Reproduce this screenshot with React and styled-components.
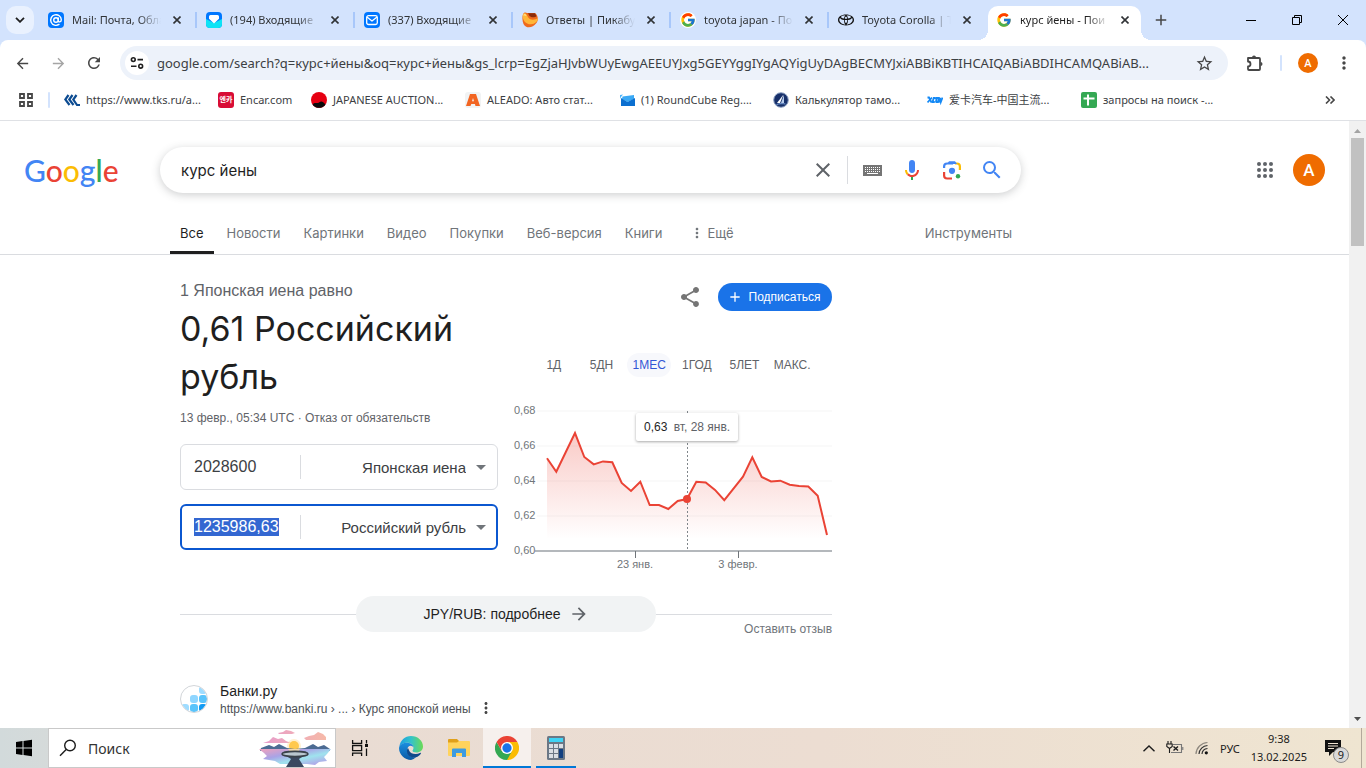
import { useEffect, useRef, useState } from 'react';
import styled, { createGlobalStyle, css } from 'styled-components';
import { FcGoogle } from 'react-icons/fc';
import {
  MdAdd,
  MdArrowBack,
  MdArrowForward,
  MdClose,
  MdMoreVert,
  MdRefresh,
  MdSearch,
  MdShare,
  MdStarBorder,
} from 'react-icons/md';
import { SiToyota } from 'react-icons/si';

const uiFont = '"Noto Sans", "Noto Sans CJK SC", sans-serif';
const pageFont = '"Liberation Sans", Arial, sans-serif';
const brandFont = 'Inter, "Open Sans", sans-serif';

const rates = [
  0.653, 0.6453, 0.6564, 0.6674, 0.6537, 0.6495, 0.6512, 0.6507, 0.6389, 0.6343,
  0.6396, 0.6263, 0.6263, 0.624, 0.6286, 0.6297, 0.6396, 0.6392, 0.6349, 0.6291,
  0.6358, 0.6425, 0.6535, 0.6423, 0.6398, 0.6402, 0.6379, 0.6371, 0.6368, 0.6316,
  0.6091,
];
const activeDay = 15;
const gridValues = [0.68, 0.66, 0.64, 0.62];

const ranges = ['1Д', '5ДН', '1МЕС', '1ГОД', '5ЛЕТ', 'МАКС.'];

const searchTabs = ['Все', 'Новости', 'Картинки', 'Видео', 'Покупки', 'Веб-версия', 'Книги'];

const url =
  'google.com/search?q=курс+йены&oq=курс+йены&gs_lcrp=EgZjaHJvbWUyEwgAEEUYJxg5GEYYggIYgAQYigUyDAgBECMYJxiABBiKBTIHCAIQABiABDIHCAMQABiAB...';

/* ---------- favicons ---------- */

const MailIcon = () => (
  <svg width="16" height="16" viewBox="0 0 16 16">
    <rect width="16" height="16" rx="4" fill="#07f" />
    <g fill="none" stroke="#fff" strokeWidth="1.4" strokeLinecap="round">
      <circle cx="8" cy="8" r="2.3" />
      <path d="M10.3 5.9v2.6c0 2 3 1.9 3-.7A5.3 5.3 0 1 0 11 12.4" />
    </g>
  </svg>
);

const InboxIcon = () => (
  <svg width="16" height="16" viewBox="0 0 16 16">
    <rect width="16" height="16" rx="4" fill="#07f" />
    <path d="M0 7l8 4 8-4v5a4 4 0 0 1-4 4H4a4 4 0 0 1-4-4z" fill="#0de3f5" />
    <path d="M4.5 3h7A1.5 1.5 0 0 1 13 4.5v2.3L8 11.5 3 6.800V4.500A1.500 1.500 0 0 1 4.500 3z" fill="#fff" />
  </svg>
);

const EnvelopeIcon = () => (
  <svg width="16" height="16" viewBox="0 0 16 16">
    <rect width="16" height="16" rx="4" fill="#07f" />
    <g fill="none" stroke="#fff" strokeWidth="1.3" strokeLinejoin="round">
      <rect x="2.7" y="3.7" width="10.6" height="8.8" rx="1.8" />
      <path d="M3 5l5 4 5-4" />
    </g>
  </svg>
);

const PikabuIcon = () => (
  <svg width="16" height="16" viewBox="0 0 16 16">
    <path d="M1 2.500C1.500 0 4 0 5 1h8c3 2 4 7 1 10.500C11 16 4 17 1.500 12 .3 9 0 5 1 2.500z" fill="#ef6a1c" />
    <path d="M.8 3c.7-2.500 3-2 4 0l1.500 2.500C8.500 8.500 13 8 16 6c0 3.500-3 6-7 6.300C4 12.500.3 8.500.8 3z" fill="#ffb638" />
    <path d="M6 1.200h7l1.500 3C13 5.500 9.500 5.800 7.500 4z" fill="#8a2c0c" />
    <path d="M1.800 3.500c.8-1.200 1.600-1 2.200.2" stroke="#ffe08a" fill="none" strokeWidth="1.2" />
  </svg>
);

const TksIcon = () => (
  <svg width="16" height="16" viewBox="0 0 16 16">
    <g fill="none" stroke="#0d4c92" strokeWidth="2.2">
      <path d="M4.500 3L1.300 7.500 5.500 13" />
      <path d="M8.500 3L5.300 7.500 9.500 13" />
      <path d="M12.500 3L9.300 7.500 13 13h3" />
    </g>
  </svg>
);

const AuctionIcon = () => (
  <svg width="16" height="16" viewBox="0 0 16 16">
    <circle cx="8" cy="8" r="8" fill="#e60012" />
    <path d="M1.500 12.500C4 9.500 6 12 8 10.500s3.500-2 6.500 2A8 8 0 0 1 1.500 12.500z" fill="#0b0b0b" />
  </svg>
);

const AleadoIcon = () => (
  <svg width="16" height="16" viewBox="0 0 16 16">
    <rect width="16" height="16" rx="3" fill="#f1f3f4" />
    <path d="M5 2h6l4 12h-4.500l-.6-2H6.300l-.8 2H1zM8 6L7 9.300h2z" fill="#f26522" fillRule="evenodd" />
  </svg>
);

const RoundCubeIcon = () => (
  <svg width="16" height="16" viewBox="0 0 16 16">
    <path d="M2 5L1 7V3l3-.500z" fill="#4fb4fb" />
    <path d="M3.500 4.500L15 3v4L8.500 10 3 7z" fill="#3aa9f5" />
    <path d="M2 6l6.500 4L16 6v8H2z" fill="#0b6fd0" />
  </svg>
);

const CustomsIcon = () => (
  <svg width="16" height="16" viewBox="0 0 16 16">
    <circle cx="8" cy="8" r="7.3" fill="#17306a" stroke="#8fa3c4" />
    <path d="M10.500 2.500L4 11h3z" fill="#fff" />
    <path d="M11 3v8H8z" fill="#b7cdec" />
    <path d="M3.500 12.500c3-1 6-1 9-.5" stroke="#7ea4dc" fill="none" />
  </svg>
);

const XcarIcon = () => (
  <svg width="16" height="16" viewBox="0 0 16 16">
    <g fill="none" stroke="#1489f5" strokeWidth="1.8">
      <path d="M.500 5.500h1.500l2.500 5M5 5.500l-4.500 5" />
      <path d="M8.500 6H6.800L5.500 10h2.300M8.500 10h2.500l.8-4H9.500L9 10" />
      <path d="M12 10.500L13 6l.8 4L15.500 5.500" />
    </g>
  </svg>
);

const SheetIcon = () => (
  <svg width="16" height="16" viewBox="0 0 16 16">
    <rect width="16" height="16" rx="2" fill="#34a853" />
    <path d="M6 2.500h2v3h5.500v2H8v6H6v-6H2.500v-2H6z" fill="#fff" />
  </svg>
);

/* ---------- page icons ---------- */

const CrossIcon = () => (
  <svg width="8" height="8" viewBox="0 0 8 8" fill="none" stroke="currentColor" strokeWidth="1.6">
    <path d="M.5 .5l7 7M7.500 .5l-7 7" />
  </svg>
);

const TuneIcon = () => (
  <svg width="16" height="16" viewBox="0 0 16 16" fill="none" stroke="#1f1f1f" strokeWidth="1.6">
    <circle cx="4.3" cy="4.6" r="1.9" />
    <path d="M8.500 4.600H14M2 11.200h5.500" />
    <circle cx="11.7" cy="11.2" r="1.9" />
  </svg>
);

const PuzzleIcon = () => (
  <svg width="18" height="18" viewBox="0 0 18 18">
    <path
      d="M2 4h11a1 1 0 0 1 1 1v10a1 1 0 0 1-1 1H3a1 1 0 0 1-1-1v-2.500a2.500 2.500 0 0 0 0-5z"
      fill="none"
      stroke="#474747"
      strokeWidth="1.8"
      strokeLinejoin="round"
    />
    <path d="M6 3.500a2 2 0 0 1 4 0zM14.500 8a2 2 0 0 1 0 4z" fill="#474747" />
  </svg>
);

const KeyboardIcon = () => (
  <svg width="19" height="11" viewBox="0 0 19 11">
    <rect width="19" height="11" fill="#757575" />
    <path d="M2 2.500h15M2 4.500h15M2 6.500h15" stroke="#fff" strokeDasharray="1 1" />
    <path d="M4 8.500h11" stroke="#fff" />
  </svg>
);

const MicIcon = () => (
  <svg width="24" height="24" viewBox="0 0 24 24">
    <path fill="#4285f4" d="M12 15c1.700 0 3-1.300 3-3V5c0-1.700-1.300-3-3-3S9 3.300 9 5v7c0 1.700 1.300 3 3 3z" />
    <path fill="#34a853" d="M11 18.100h2V22h-2z" />
    <path fill="#fbbc04" d="M7 12H5c0 1.900.8 3.700 2 5l1.500-1.500C7.600 14.600 7 13.400 7 12z" />
    <path fill="#ea4335" d="M12 17c-1.400 0-2.600-.6-3.500-1.500L7 17c1.300 1.300 3 2.100 5 2.100 3.900 0 7-3.200 7-7.100h-2c0 2.800-2.200 5-5 5z" />
  </svg>
);

const LensIcon = () => (
  <svg width="20" height="20" viewBox="0 0 20 20">
    <g fill="none" strokeWidth="2.2">
      <path d="M2.100 8V6.500a3 3 0 0 1 3-3H11" stroke="#4285f4" />
      <path d="M13 3.500h1.900a3 3 0 0 1 3 3V10" stroke="#fbbc04" />
      <path d="M2.100 12v3.500a3 3 0 0 0 3 3H10" stroke="#ea4335" />
    </g>
    <path d="M5 4l2-2.800h6L15 4z" fill="#4285f4" />
    <circle cx="10" cy="10.8" r="3.1" fill="#4285f4" />
    <circle cx="16" cy="16.2" r="2.2" fill="#34a853" />
  </svg>
);

const DotsIcon = () => (
  <svg width="16" height="16" viewBox="0 0 16 16" fill="#5f6368">
    {[2, 8, 14].map(y => [2, 8, 14].map(x => <circle key={`${x}-${y}`} cx={x} cy={y} r="2" />))}
  </svg>
);

const BankiIcon = () => (
  <svg width="28" height="28" viewBox="0 0 28 28">
    <defs>
      <clipPath id="bankiClip">
        <circle cx="14" cy="14" r="13" />
      </clipPath>
    </defs>
    <g clipPath="url(#bankiClip)">
      <rect x="19" y="1" width="8" height="8" rx="3" fill="#9fdcff" />
      <rect x="10" y="10" width="8" height="8" rx="3" fill="#8fd6ff" />
      <rect x="19" y="10" width="8" height="8" rx="3" fill="#5ac4fb" />
      <rect x="1" y="19" width="8" height="8" rx="3" fill="#9fdcff" />
      <rect x="10" y="19" width="8" height="8" rx="3" fill="#5ac4fb" />
      <rect x="19" y="19" width="8" height="8" rx="3" fill="#129bf4" />
    </g>
    <circle cx="14" cy="14" r="13.5" fill="none" stroke="#d2d5d9" />
  </svg>
);

/* ---------- taskbar icons ---------- */

const WindowsIcon = () => (
  <svg width="16" height="18" viewBox="0 0 16 18">
    <path d="M0 3l6.500-1v6.500H0zM7.500 1.900L16 .7v7.800H7.500zM0 9.500h6.500V16L0 15zM7.500 9.500H16v7.800l-8.500-1.200z" fill="#000" />
  </svg>
);

const Loupe = () => (
  <svg width="18" height="18" viewBox="0 0 18 18" fill="none" stroke="#1c1c1c" strokeWidth="1.4">
    <circle cx="11" cy="6.5" r="5.3" />
    <path d="M7.200 10.400L1 16.800" />
  </svg>
);

const LandscapeArt = () => (
  <svg width="74" height="38" viewBox="0 0 74 38">
    <defs>
      <linearGradient id="water" x1="0" x2="1" y1="0" y2="1">
        <stop offset="0" stopColor="#f3a1bb" />
        <stop offset=".35" stopColor="#a9a3e6" />
        <stop offset=".6" stopColor="#9fe3ee" />
        <stop offset="1" stopColor="#b78de6" />
      </linearGradient>
      <linearGradient id="cloud" x1="0" x2="1">
        <stop offset="0" stopColor="#e79dcb" />
        <stop offset="1" stopColor="#f6b9a8" />
      </linearGradient>
    </defs>
    <path d="M20 4l5-1 3-2 5 1 4 2-3 1H21zM46 9l5-2 5-1 4-3 5 2 3 3v3H48zM5 14l6-2 4-4 5 2 4-1 4 3 5 2H6z" fill="url(#cloud)" />
    <circle cx="36" cy="17" r="7" fill="#ffd98a" opacity=".4" />
    <circle cx="36" cy="17" r="5" fill="#ffc94d" />
    <path d="M3 19l8-3 5 2 5-3 8 4 8 1 10-1 8-4 5 3 6-2 6 4v2H2z" fill="#4c6b93" />
    <path d="M1 20h72l-4 5-3 3 3 4-8 1-4 3-8-1H22l-5-3-12-2 4-3-3-3z" fill="url(#water)" />
    <path d="M30 20h12l-3 5h-6z" fill="#ffe7a6" opacity=".8" />
    <path d="M27 26h20l-6 4 5 8H28l5-8z" fill="#3b4860" />
    <ellipse cx="37" cy="25" rx="13" ry="2.6" fill="#b9c6cf" stroke="#39414a" strokeWidth="1.6" />
  </svg>
);

const TaskViewIcon = () => (
  <svg width="18" height="16" viewBox="0 0 18 16" fill="none" stroke="#111" strokeWidth="1.3">
    <path d="M1.600 0v3.400h9V0M1.600 16v-2.800h9V16M1.600 5.500h9v5.200h-9zM15.500 0v3.500M15.500 8.500V16" />
    <path d="M14 4h3v3h-3z" fill="#111" stroke="none" />
  </svg>
);

const EdgeIcon = () => (
  <svg width="24" height="24" viewBox="0 0 24 24">
    <defs>
      <linearGradient id="edgeTop" x1="0" x2="1">
        <stop offset="0" stopColor="#1b9de2" />
        <stop offset=".5" stopColor="#33c3c9" />
        <stop offset="1" stopColor="#6cdb54" />
      </linearGradient>
      <linearGradient id="edgeLow" x1="0" x2="0" y1="0" y2="1">
        <stop offset="0" stopColor="#1a8fe0" />
        <stop offset="1" stopColor="#0c59a4" />
      </linearGradient>
    </defs>
    <path d="M.3 11C1 4.500 6 0 12 0c7 0 12 5 12 10.500 0 3.800-3 6-6.500 6-2.500 0-4-.8-4-1.700 0-.6 1-1.300 1-3C14.500 9 12 6.800 8.500 6.800 4.500 6.800 1 8.500.3 11z" fill="url(#edgeTop)" />
    <path d="M.1 11.500C.6 8.500 4 6.700 8 6.700c4 0 6.500 2.300 6.500 5-.5-1.200-1.700-1.900-2.700-1.900-2.500 0-3.800 2.400-3.500 4.900.4 4 4.200 7.200 8.700 6.600a12 12 0 0 1-5 2.700C5.500 24-.6 18 .1 11.500z" fill="url(#edgeLow)" />
    <path d="M9 12c-.9 1-1.200 2.500-1 4 .5 3.700 4.500 6.300 9 5.300 2-.5 4-2 5-4 .2-.5-.1-.7-.5-.5-4.500 2.300-10 1-11-1.500-.5-1-.8-2.200-1.500-3.300z" fill="#114a8b" />
  </svg>
);

const ExplorerIcon = () => (
  <svg width="22" height="20" viewBox="0 0 22 20">
    <path d="M0 2a1 1 0 0 1 1-1h8l2 2v3H0z" fill="#e0a01a" />
    <path d="M0 4.500h9l2-1.500h10a1 1 0 0 1 1 1v13a1 1 0 0 1-1 1H1a1 1 0 0 1-1-1z" fill="#ffd35c" />
    <path d="M4 11.500a1 1 0 0 1 1-1h12a1 1 0 0 1 1 1V19h-4v-4H8v4H4z" fill="#3e9be0" />
  </svg>
);

const ChromeIcon = () => (
  <svg width="24" height="24" viewBox="0 0 48 48">
    <path d="M24 24L44.800 12A24 24 0 0 1 24 48z" fill="#fbbc04" />
    <path d="M24 48A24 24 0 0 1 3.200 12L13.600 30 24 34.500l9.500-3.500z" fill="#34a853" />
    <path d="M24 12h20.800L36 26z" fill="#fbbc04" />
    <path d="M3.200 12A24 24 0 0 1 44.800 12H24l-10.400 18z" fill="#ea4335" />
    <circle cx="24" cy="24" r="12" fill="#fff" />
    <circle cx="24" cy="24" r="9.3" fill="#1a73e8" />
  </svg>
);

const CalcIcon = () => (
  <svg width="18" height="24" viewBox="0 0 18 24">
    <rect width="18" height="24" rx="1.5" fill="#6b7785" />
    <rect x="2" y="2" width="14" height="4" fill="#3fd3f5" />
    {[8, 13, 18].map(y =>
      [2, 7, 12].map(x => <rect key={`${x}-${y}`} x={x} y={y} width="4" height="4" fill="#d9dee4" />)
    )}
    <rect x="12" y="13" width="4" height="9" fill="#123f80" />
  </svg>
);

const BatteryIcon = () => (
  <svg width="18" height="14" viewBox="0 0 18 14" fill="none" stroke="#1c1c1c" strokeWidth="1.1">
    <path d="M2 0v3M5 0v3M.8 3h5.400v2.500L3.500 7.500.8 5.500zM3.500 7.500V12" />
    <path d="M7 3.500h8.500v8H5M16.800 6v3" stroke="#777" />
    <path d="M7.500 5.500l4.500 4M12 5.500l-4.500 4" strokeWidth="1.4" />
  </svg>
);

const WifiIcon = () => (
  <svg width="14" height="14" viewBox="0 0 14 14" fill="none" stroke="#333" strokeWidth="1.2">
    <path d="M1 13A12 12 0 0 1 12.500 1.500" stroke="#8d877e" />
    <path d="M4 13A9 9 0 0 1 12.500 4.500M7 13a6 6 0 0 1 5.500-5.500" />
    <circle cx="11.3" cy="11.8" r="1.6" fill="#111" stroke="none" />
  </svg>
);

const NoteIcon = () => (
  <svg width="16" height="16" viewBox="0 0 16 16">
    <path d="M0 0h16v12h-8l-4 4v-4H0z" fill="#111" />
    <path d="M3 3.500h10M3 6h10M3 8.500h6" stroke="#efe3d2" />
  </svg>
);

/* ---------- data that needs the icons ---------- */

const tabs = [
  { title: 'Mail: Почта, Обла', icon: <MailIcon /> },
  { title: '(194) Входящие', icon: <InboxIcon /> },
  { title: '(337) Входящие', icon: <EnvelopeIcon /> },
  { title: 'Ответы | Пикабу', icon: <PikabuIcon /> },
  { title: 'toyota japan - По', icon: <FcGoogle size={16} />, round: true },
  { title: 'Toyota Corolla | T', icon: <SiToyota size={16} color="#111" /> },
  { title: 'курс йены - Пои', icon: <FcGoogle size={16} />, active: true },
];

const bookmarks = [
  { title: 'https://www.tks.ru/a...', icon: <TksIcon /> },
  { title: 'Encar.com', short: true },
  { title: 'JAPANESE AUCTION...', icon: <AuctionIcon /> },
  { title: 'ALEADO: Авто стат...', icon: <AleadoIcon /> },
  { title: '(1) RoundCube Reg....', icon: <RoundCubeIcon /> },
  { title: 'Калькулятор тамо...', icon: <CustomsIcon /> },
  { title: '爱卡汽车-中国主流...', icon: <XcarIcon /> },
  { title: 'запросы на поиск -...', icon: <SheetIcon /> },
];

function TabStrip() {
  return (
    <Strip>
      <TabSearch aria-label="Поиск вкладок">
        <svg width="10" height="6" viewBox="0 0 10 6" fill="none" stroke="#1f1f1f" strokeWidth="1.8">
          <path d="M1 .8l4 4 4-4" />
        </svg>
      </TabSearch>
      {tabs.map((tab, i) => (
        <Tab key={tab.title} $active={tab.active} $line={!tab.active && i < 5}>
          <Favicon $round={tab.round}>{tab.icon}</Favicon>
          <TabTitle $active={tab.active}>{tab.title}</TabTitle>
          <TabClose aria-label="Закрыть">
            <CrossIcon />
          </TabClose>
        </Tab>
      ))}
      <NewTab aria-label="Новая вкладка">
        <MdAdd size={18} />
      </NewTab>
      <WindowButtons>
        <WindowButton aria-label="Свернуть">
          <svg width="10" height="10" stroke="#000">
            <path d="M0 5.500h10" />
          </svg>
        </WindowButton>
        <WindowButton aria-label="Развернуть">
          <svg width="10" height="10" fill="none" stroke="#000">
            <path d="M.5 2.500h7v7h-7zM2.500 2.500v-2h7v7h-2" />
          </svg>
        </WindowButton>
        <WindowButton aria-label="Закрыть окно">
          <svg width="10" height="10" stroke="#000">
            <path d="M0 0l10 10M10 0L0 10" />
          </svg>
        </WindowButton>
      </WindowButtons>
    </Strip>
  );
}

function Toolbar() {
  return (
    <ToolbarWrap>
      <ToolButton aria-label="Назад">
        <MdArrowBack size={17} />
      </ToolButton>
      <ToolButton aria-label="Вперёд" $muted>
        <MdArrowForward size={17} />
      </ToolButton>
      <ToolButton aria-label="Обновить">
        <MdRefresh size={18} />
      </ToolButton>
      <AddressBar>
        <SiteInfo aria-label="Сведения о сайте">
          <TuneIcon />
        </SiteInfo>
        <AddressInput aria-label="Адресная строка" defaultValue={url} />
        <PlainButton aria-label="Добавить в закладки">
          <MdStarBorder size={19} />
        </PlainButton>
      </AddressBar>
      <ToolbarEnd>
        <PlainButton aria-label="Расширения">
          <PuzzleIcon />
        </PlainButton>
        <Separator />
        <Avatar $small>A</Avatar>
        <PlainButton aria-label="Меню">
          <MdMoreVert size={20} />
        </PlainButton>
      </ToolbarEnd>
    </ToolbarWrap>
  );
}

function BookmarksBar() {
  return (
    <Bookmarks>
      <AppsButton aria-label="Приложения">
        <svg width="14" height="14" fill="none" stroke="#474747" strokeWidth="1.8">
          <path d="M1 1h4v4H1zM9 1h4v4H9zM1 9h4v4H1zM9 9h4v4H9z" />
        </svg>
      </AppsButton>
      <Separator />
      <BookmarkList>
        {bookmarks.map(item => (
          <Bookmark key={item.title} href="#" $short={item.short}>
            {item.icon || <EncarIcon>엔카</EncarIcon>}
            <span>{item.title}</span>
          </Bookmark>
        ))}
      </BookmarkList>
      <PlainButton aria-label="Другие закладки">
        <svg width="10" height="8" fill="none" stroke="#474747" strokeWidth="1.6">
          <path d="M1 .5L4.500 4 1 7.500M5.500 .5L9 4 5.500 7.500" />
        </svg>
      </PlainButton>
    </Bookmarks>
  );
}

function SearchHeader() {
  return (
    <Header>
      <SearchRow>
        <Logo href="#" aria-label="Google">
          <LogoLetter $color="#4285f4">G</LogoLetter>
          <LogoLetter $color="#ea4335">o</LogoLetter>
          <LogoLetter $color="#fbbc04">o</LogoLetter>
          <LogoLetter $color="#4285f4">g</LogoLetter>
          <LogoLetter $color="#34a853">l</LogoLetter>
          <LogoLetter $color="#ea4335">e</LogoLetter>
        </Logo>
        <SearchBox>
          <SearchInput aria-label="Найти" defaultValue="курс йены" />
          <BoxButton aria-label="Очистить">
            <MdClose size={24} />
          </BoxButton>
          <BoxLine />
          <BoxButton aria-label="Клавиатура">
            <KeyboardIcon />
          </BoxButton>
          <BoxButton aria-label="Голосовой поиск">
            <MicIcon />
          </BoxButton>
          <BoxButton aria-label="Поиск по картинке">
            <LensIcon />
          </BoxButton>
          <BoxButton aria-label="Поиск" $color="#4285f4">
            <MdSearch size={24} />
          </BoxButton>
        </SearchBox>
        <Account>
          <PlainButton aria-label="Приложения Google">
            <DotsIcon />
          </PlainButton>
          <Avatar>A</Avatar>
        </Account>
      </SearchRow>
      <Nav>
        {searchTabs.map((name, i) => (
          <NavLink key={name} href="#" $active={i === 0}>
            {name}
          </NavLink>
        ))}
        <NavButton>
          <MdMoreVert size={16} />
          Ещё
        </NavButton>
        <NavButton $end>Инструменты</NavButton>
      </Nav>
    </Header>
  );
}

function Chart() {
  const x = i => 35 + (i * 280) / (rates.length - 1);
  const y = value => 10 + (0.68 - value) * 1750;
  const line = rates.map((value, i) => `${x(i).toFixed(1)},${y(value).toFixed(1)}`).join(' ');

  return (
    <ChartWrap>
      <svg width="100%" viewBox="0 0 320 174">
        <defs>
          <linearGradient id="area" x1="0" x2="0" y1="0" y2="1">
            <stop offset="0" stopColor="#ea4335" stopOpacity=".28" />
            <stop offset=".9" stopColor="#ea4335" stopOpacity="0" />
          </linearGradient>
        </defs>
        {gridValues.map(value => (
          <path key={value} d={`M25 ${y(value)}h295`} stroke="#fafafa" strokeWidth="2" />
        ))}
        <polygon points={`35,150 ${line} 315,150`} fill="url(#area)" />
        <path d="M23 150h297" stroke="#b4b8bc" strokeWidth="2" />
        <path d="M123.500 150v7M226.500 150v7" stroke="#70757a" />
        <path d={`M${x(activeDay) + 0.5} 10v138`} stroke="#80868b" strokeDasharray="2 2" />
        <polyline points={line} fill="none" stroke="#ea4335" strokeWidth="2" />
        <circle cx={x(activeDay)} cy={y(rates[activeDay])} r="4" fill="#ea4335" />
        {[...gridValues, 0.6].map(value => (
          <AxisText key={value} x="2" y={y(value) + 3}>
            {value.toFixed(2).replace('.', ',')}
          </AxisText>
        ))}
        <AxisText x="123" y="167" textAnchor="middle">
          23 янв.
        </AxisText>
        <AxisText x="226" y="167" textAnchor="middle">
          3 февр.
        </AxisText>
      </svg>
      <Tooltip>
        <b>0,63</b> вт, 28 янв.
      </Tooltip>
    </ChartWrap>
  );
}

function Currency({ name, label, amount, inputRef }) {
  return (
    <CurrencyBox>
      <AmountInput ref={inputRef} aria-label={`Сумма, ${label}`} defaultValue={amount} />
      <CurrencyLine />
      <CurrencySelect aria-label="Валюта" name={name}>
        <option>{label}</option>
      </CurrencySelect>
      <svg width="10" height="5">
        <path d="M0 0h10L5 5z" fill="#70757a" />
      </svg>
    </CurrencyBox>
  );
}

function Converter() {
  const [range, setRange] = useState('1МЕС');
  const target = useRef(null);

  useEffect(() => {
    target.current.focus();
    target.current.select();
  }, []);

  return (
    <Card>
      <Columns>
        <div>
          <Equals>1 Японская иена равно</Equals>
          <Rate>0,61 Российский рубль</Rate>
          <Updated>
            13 февр., 05:34 UTC · <a href="#">Отказ от обязательств</a>
          </Updated>
          <Fields>
            <Currency name="from" label="Японская иена" amount="2028600" />
            <Currency name="to" label="Российский рубль" amount="1235986,63" inputRef={target} />
          </Fields>
        </div>
        <ChartColumn>
          <Actions>
            <PlainButton aria-label="Поделиться">
              <MdShare size={24} color="#757575" />
            </PlainButton>
            <Subscribe>
              <MdAdd size={16} />
              Подписаться
            </Subscribe>
          </Actions>
          <Ranges>
            {ranges.map(name => (
              <Range key={name} $active={name === range} onClick={() => setRange(name)}>
                {name}
              </Range>
            ))}
          </Ranges>
          <Chart />
        </ChartColumn>
      </Columns>
      <MoreRow>
        <MoreLink href="#">
          JPY/RUB: подробнее
          <MdArrowForward size={20} color="#5f6368" />
        </MoreLink>
      </MoreRow>
      <Feedback>
        <a href="#">Оставить отзыв</a>
      </Feedback>
    </Card>
  );
}

function Taskbar() {
  return (
    <TaskbarWrap>
      <TaskButton aria-label="Пуск">
        <WindowsIcon />
      </TaskButton>
      <TaskSearch>
        <Loupe />
        <input aria-label="Поиск в Windows" placeholder="Поиск" />
        <LandscapeArt />
      </TaskSearch>
      <TaskButton aria-label="Представление задач">
        <TaskViewIcon />
      </TaskButton>
      <Apps>
        <TaskButton aria-label="Edge">
          <EdgeIcon />
        </TaskButton>
        <TaskButton aria-label="Проводник">
          <ExplorerIcon />
        </TaskButton>
        <TaskButton aria-label="Chrome" $current>
          <ChromeIcon />
        </TaskButton>
        <TaskButton aria-label="Калькулятор" $open>
          <CalcIcon />
        </TaskButton>
      </Apps>
      <Tray>
        <svg width="12" height="7" fill="none" stroke="#1c1c1c" strokeWidth="1.4">
          <path d="M.5 6.300L6 1l5.500 5.300" />
        </svg>
        <BatteryIcon />
        <WifiIcon />
        <span>РУС</span>
        <Clock>
          <span>9:38</span>
          <span>13.02.2025</span>
        </Clock>
        <Notifications aria-label="Уведомления">
          <NoteIcon />
          <NoteCount>9</NoteCount>
        </Notifications>
        <DesktopEdge />
      </Tray>
    </TaskbarWrap>
  );
}

function App() {
  return (
    <>
      <GlobalStyle />
      <Screen>
        <TabStrip />
        <Toolbar />
        <BookmarksBar />
        <Viewport>
          <Page>
            <SearchHeader />
            <Converter />
            <Result>
              <BankiIcon />
              <ResultText href="#">
                <strong>Банки.ру</strong>
                <span>https://www.banki.ru › ... › Курс японской иены</span>
              </ResultText>
              <PlainButton aria-label="О результате">
                <MdMoreVert size={18} />
              </PlainButton>
            </Result>
          </Page>
          <Scrollbar>
            <svg width="7" height="4">
              <path d="M0 4h7L3.500 0z" fill="#a3a3a3" />
            </svg>
            <Thumb />
            <svg width="7" height="4">
              <path d="M0 0h7L3.500 4z" fill="#505050" />
            </svg>
          </Scrollbar>
        </Viewport>
        <Taskbar />
      </Screen>
    </>
  );
}

export default App;

const GlobalStyle = createGlobalStyle`
  * {
    box-sizing: border-box;
  }
  body {
    margin: 0;
    overflow: hidden;
    background: #fff;
  }
  svg {
    display: block;
    flex-shrink: 0;
  }
  a {
    color: inherit;
    text-decoration: none;
  }
  button, input, select {
    padding: 0;
    border: 0;
    background: none;
    font: inherit;
    color: inherit;
    outline: none;
  }
`;

const Screen = styled.div`
  display: flex;
  flex-direction: column;
  height: 100vh;
  background: #d3e3fd;
  font-family: ${uiFont};
`;

const PlainButton = styled.button`
  display: flex;
  align-items: center;
  justify-content: center;
  color: #474747;
`;

const Strip = styled.div`
  display: flex;
  flex: none;
  align-items: flex-end;
  height: 40px;
  padding-left: 6px;
`;

const TabSearch = styled(PlainButton)`
  width: 28px;
  height: 28px;
  margin: 0 6px 6px 0;
  border-radius: 10px;
  background: #e9f1fe;
`;

const Tab = styled.div`
  display: flex;
  flex: 0 1 158px;
  align-items: center;
  min-width: 0;
  height: 34px;
  padding: 0 17px 6px 8px;

  ${({ $line }) =>
    $line &&
    css`
      background: linear-gradient(#a8c7fa, #a8c7fa) right 1px top 6px / 2px 16px no-repeat;
    `}

  ${({ $active }) =>
    $active &&
    css`
      position: relative;
      flex-basis: 153px;
      padding-right: 12px;
      border-radius: 10px 10px 0 0;
      background: #fff;

      /* curved feet of the open tab */
      &::before,
      &::after {
        content: '';
        position: absolute;
        bottom: 0;
        width: 10px;
        height: 10px;
      }
      &::before {
        left: -10px;
        background: radial-gradient(circle at 0 0, transparent 10px, #fff 10px);
      }
      &::after {
        right: -10px;
        background: radial-gradient(circle at 100% 0, transparent 10px, #fff 10px);
      }
    `}
`;

const Favicon = styled.span`
  flex: none;
  border-radius: 50%;
  background: ${({ $round }) => ($round ? '#fff' : 'none')};
`;

const TabTitle = styled.span`
  flex: 1;
  overflow: hidden;
  margin: 0 12px 0 8px;
  font-size: 11px;
  line-height: 16px;
  white-space: nowrap;
  color: ${({ $active }) => ($active ? '#1f1f1f' : '#303336')};
  mask-image: linear-gradient(to right, #000 75%, transparent);
`;

const TabClose = styled(PlainButton)`
  flex: none;
  width: 8px;
  height: 16px;
  color: #303336;
`;

const NewTab = styled(PlainButton)`
  width: 28px;
  height: 28px;
  margin: 0 0 6px 6px;
`;

const WindowButtons = styled.div`
  display: flex;
  align-self: stretch;
  margin-left: auto;
`;

const WindowButton = styled(PlainButton)`
  width: 46px;
`;

const ToolbarWrap = styled.div`
  display: flex;
  flex: none;
  align-items: center;
  height: 46px;
  padding: 0 12px 0 4px;
  border-radius: 8px 8px 0 0;
  background: #fff;
`;

const ToolButton = styled(PlainButton)`
  width: 36px;
  height: 34px;
  color: ${({ $muted }) => ($muted ? '#a5a5a5' : '#474747')};
`;

const AddressBar = styled.div`
  display: flex;
  flex: 1;
  align-items: center;
  height: 34px;
  margin: 0 18px 0 8px;
  padding: 0 14px 0 5px;
  border-radius: 17px;
  background: #edf2fa;
`;

const SiteInfo = styled(PlainButton)`
  flex: none;
  width: 24px;
  height: 24px;
  border-radius: 50%;
  background: #fff;
`;

const AddressInput = styled.input`
  flex: 1;
  min-width: 0;
  margin: 0 8px;
  font-size: 13px;
  color: #3c4043;
`;

const ToolbarEnd = styled.div`
  display: flex;
  align-items: center;
  gap: 16px;
`;

const Separator = styled.span`
  flex: none;
  width: 2px;
  height: 16px;
  border-radius: 1px;
  background: #d3e3fd;
`;

const Avatar = styled.button`
  flex: none;
  width: ${({ $small }) => ($small ? '20px' : '32px')};
  height: ${({ $small }) => ($small ? '20px' : '32px')};
  border-radius: 50%;
  background: #ef6c00;
  font-family: Roboto, sans-serif;
  font-size: ${({ $small }) => ($small ? '11px' : '17px')};
  font-weight: 500;
  color: #fff;
`;

const Bookmarks = styled.div`
  display: flex;
  flex: none;
  align-items: center;
  height: 35px;
  padding: 0 31px 6px 18px;
  border-bottom: 1px solid #dfe1e5;
  background: #fff;
`;

const AppsButton = styled(PlainButton)`
  width: 16px;
  margin-right: 14px;
`;

const BookmarkList = styled.div`
  display: flex;
  flex: 1;
  min-width: 0;
  padding-left: 14px;
`;

const Bookmark = styled.a`
  display: flex;
  flex: 0 0 ${({ $short }) => ($short ? '93px' : '154px')};
  align-items: center;
  gap: 6px;
  font-size: 11px;
  line-height: 16px;
  white-space: nowrap;
  color: #3c4043;
`;

const EncarIcon = styled.span`
  width: 16px;
  height: 16px;
  border-radius: 3px;
  background: #d80c35;
  font: bold 7px/15px 'Noto Sans CJK KR', sans-serif;
  text-align: center;
  color: #fff;
`;

const Viewport = styled.div`
  display: flex;
  flex: 1;
  min-height: 0;
`;

const Page = styled.div`
  flex: 1;
  overflow: hidden;
  min-width: 0;
  background: #fff;
  font-family: ${pageFont};
`;

const Scrollbar = styled.div`
  display: flex;
  flex: none;
  flex-direction: column;
  align-items: center;
  width: 17px;
  padding: 8px 0 7px;
  background: #f1f1f1;
`;

const Thumb = styled.div`
  width: 13px;
  height: 108px;
  margin: 5px 0 auto;
  background: #c1c1c1;
`;

const Header = styled.header`
  padding-top: 26px;
  border-bottom: 1px solid #dadce0;
`;

const SearchRow = styled.div`
  display: flex;
  align-items: center;
  padding: 0 24px;
`;

const Logo = styled.a`
  flex: none;
  width: 136px;
  font-family: Lato, sans-serif;
  font-size: 30px;
  font-weight: 500;
  line-height: 46px;
`;

const LogoLetter = styled.span`
  color: ${({ $color }) => $color};
`;

const SearchBox = styled.div`
  display: flex;
  flex: 0 1 861px;
  align-items: center;
  height: 46px;
  padding: 0 9px 0 21px;
  border-radius: 24px;
  background: #fff;
  box-shadow: 0 2px 8px rgba(60, 64, 67, 0.25);
`;

const SearchInput = styled.input`
  flex: 1;
  min-width: 0;
  font-family: ${brandFont};
  font-size: 15px;
  color: #1f1f1f;
`;

const BoxButton = styled.button`
  display: flex;
  justify-content: center;
  width: 40px;
  color: ${({ $color }) => $color || '#5f6368'};
`;

const BoxLine = styled.span`
  width: 1px;
  height: 28px;
  margin: 0 4px;
  background: #dadce0;
`;

const Account = styled.div`
  display: flex;
  align-items: center;
  gap: 20px;
  margin-left: auto;
`;

const Nav = styled.nav`
  display: flex;
  gap: 3px;
  max-width: 1022px;
  margin-top: 19px;
  padding-left: 170px;
  font-family: ${brandFont};
  font-size: 13px;
  color: #70757a;
`;

const NavLink = styled.a`
  height: 42px;
  padding: 0 10px;
  border-bottom: 3px solid ${({ $active }) => ($active ? '#1f1f1f' : 'transparent')};
  line-height: 42px;
  color: ${({ $active }) => ($active ? '#1f1f1f' : 'inherit')};
`;

const NavButton = styled.button`
  display: flex;
  align-items: center;
  gap: 2px;
  height: 42px;
  margin-left: ${({ $end }) => ($end ? 'auto' : '4px')};
  padding: 0 10px;
`;

const Card = styled.section`
  max-width: 832px;
  padding: 24px 0 0 180px;
`;

const Columns = styled.div`
  display: grid;
  grid-template-columns: 318px 320px;
  gap: 14px;
`;

const Equals = styled.div`
  font-size: 16px;
  line-height: 24px;
  color: #5f6368;
`;

const Rate = styled.div`
  margin-top: 2px;
  font-family: ${brandFont};
  font-size: 34px;
  line-height: 48px;
  color: #1f1f1f;
`;

const Updated = styled.div`
  margin-top: 9px;
  font-size: 12px;
  line-height: 16px;
  color: #5f6368;
`;

const Fields = styled.div`
  display: flex;
  flex-direction: column;
  gap: 14px;
  margin-top: 18px;
`;

const CurrencyBox = styled.div`
  display: flex;
  align-items: center;
  height: 46px;
  padding: 0 11px 0 13px;
  border: 1px solid #dadce0;
  border-radius: 6px;
  font-size: 16px;
  color: #3c4043;

  &:focus-within {
    padding: 0 10px 0 12px;
    border: 2px solid #0b57d0;
  }
`;

const AmountInput = styled.input`
  width: 106px;

  &::selection {
    background: #3367d1;
    color: #fff;
  }
`;

const CurrencyLine = styled.span`
  width: 1px;
  height: 24px;
  background: #dadce0;
`;

const CurrencySelect = styled.select`
  flex: 1;
  appearance: none;
  margin-right: 10px;
  font-size: 15px;
  text-align-last: right;
`;

const ChartColumn = styled.div`
  padding-top: 4px;
`;

const Actions = styled.div`
  display: flex;
  justify-content: flex-end;
  gap: 16px;
`;

const Subscribe = styled.button`
  display: flex;
  align-items: center;
  justify-content: center;
  gap: 6px;
  width: 114px;
  height: 28px;
  padding-right: 3px;
  border-radius: 14px;
  background: #1a73e8;
  font-size: 12px;
  color: #fff;
`;

const Ranges = styled.div`
  display: grid;
  grid-template-columns: repeat(6, 1fr);
  margin-top: 42px;
  padding: 0 16px 0 18px;
`;

const Range = styled.button`
  justify-self: center;
  min-width: 44px;
  height: 24px;
  border-radius: 12px;
  background: ${({ $active }) => ($active ? '#f7f8fc' : 'none')};
  font-size: 12px;
  color: ${({ $active }) => ($active ? '#3457d5' : '#5f6368')};
`;

const ChartWrap = styled.div`
  position: relative;
  margin-top: 24px;
`;

const AxisText = styled.text`
  font-size: 11px;
  fill: #70757a;
`;

const Tooltip = styled.div`
  position: absolute;
  top: 12px;
  left: 124px;
  padding: 0 8px;
  border-radius: 2px;
  background: #fff;
  box-shadow: 0 1px 3px rgba(0, 0, 0, 0.35);
  font-size: 12px;
  line-height: 28px;
  white-space: nowrap;
  color: #5f6368;

  b {
    margin-right: 3px;
    font-weight: normal;
    color: #1f1f1f;
  }
`;

const MoreRow = styled.div`
  display: flex;
  align-items: center;
  margin-top: 21px;

  &::before,
  &::after {
    content: '';
    flex: 1;
    height: 1px;
    background: #dadce0;
  }
`;

const MoreLink = styled.a`
  display: flex;
  align-items: center;
  justify-content: center;
  gap: 8px;
  width: 300px;
  height: 36px;
  border-radius: 18px;
  background: #f1f3f4;
  font-size: 14px;
  color: #1f1f1f;
`;

const Feedback = styled.div`
  margin-top: -11px;
  font-size: 12px;
  line-height: 16px;
  text-align: right;
  color: #70757a;
`;

const Result = styled.div`
  display: flex;
  align-items: center;
  margin-top: 44px;
  padding-left: 180px;

  button {
    align-self: flex-end;
    margin-left: 6px;
  }
`;

const ResultText = styled.a`
  display: flex;
  flex-direction: column;
  margin-left: 12px;

  strong {
    font-size: 14px;
    font-weight: normal;
    line-height: 20px;
    color: #1f1f1f;
  }

  span {
    font-size: 12px;
    line-height: 16px;
    color: #4d5156;
  }
`;

const TaskbarWrap = styled.footer`
  display: flex;
  flex: none;
  height: 40px;
  background: linear-gradient(to right, #d2dadb, #e9dcd3 25%, #ecddd2 60%, #efe5d1);
`;

const TaskButton = styled.button`
  display: flex;
  flex: none;
  align-items: center;
  justify-content: center;
  width: 48px;

  ${({ $current }) =>
    $current &&
    css`
      background: #f6f0ed;
      box-shadow: inset 0 -2px #0078d7;
    `}

  ${({ $open }) =>
    $open &&
    css`
      width: 40px;
      margin-left: 5px;
      box-shadow: inset 0 -2px #0078d7;
    `}
`;

const TaskSearch = styled.label`
  display: flex;
  flex: 0 1 288px;
  align-items: center;
  min-width: 0;
  padding: 0 3px 0 10px;
  border: 1px solid #c9c9c9;
  background: #fff;

  input {
    flex: 1;
    min-width: 0;
    margin-left: 11px;
    font-size: 14px;
    color: #333;
  }

  input::placeholder {
    color: #333;
  }
`;

const Apps = styled.div`
  display: flex;
  margin-left: 3px;
`;

const Tray = styled.div`
  display: flex;
  align-items: center;
  gap: 11px;
  margin-left: auto;
  font-size: 11px;
  color: #1c1c1c;
`;

const Clock = styled.div`
  display: flex;
  flex-direction: column;
  align-items: center;
  line-height: 18px;
`;

const Notifications = styled.button`
  position: relative;
  margin: 0 20px 0 7px;
`;

const NoteCount = styled.span`
  position: absolute;
  top: 7px;
  left: 8px;
  width: 16px;
  height: 16px;
  border: 1px solid #8a8a8a;
  border-radius: 50%;
  background: #d9d9d9;
  font-size: 11px;
  line-height: 14px;
`;

const DesktopEdge = styled.span`
  align-self: stretch;
  width: 5px;
  margin-left: -11px;
  border-left: 1px solid #b3a99b;
`;
